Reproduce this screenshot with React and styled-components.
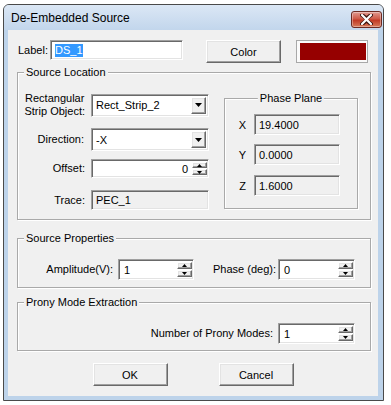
import React from 'react';
import styled, { createGlobalStyle } from 'styled-components';

const GlobalStyle = createGlobalStyle`
    html, body {
        margin: 0;
        padding: 0;
        background: #ffffff;
    }
    body {
        font-family: "Liberation Sans", Arial, sans-serif;
        font-size: 11px;
        color: #000;
    }
    * {
        box-sizing: border-box;
    }
`;

const Window = styled.div`
    margin: 4px 0 0 3px;
    width: 381px;
    height: 397px;
    border: 1px solid #4a4a4a;
    border-radius: 6px 6px 0 0;
    background: #bdd3ea;
    display: flex;
    flex-direction: column;
    overflow: hidden;
`;

const TitleBar = styled.div`
    height: 25px;
    flex-shrink: 0;
    display: flex;
    align-items: center;
    justify-content: space-between;
    padding: 0 1px 0 7px;
    background: linear-gradient(#dbe7f5, #c2d6ec);
`;

const Title = styled.div`
    font-size: 12px;
    color: #000;
`;

const CloseButton = styled.div`
    width: 31px;
    height: 17px;
    margin-top: 4px;
    border: 1px solid #6d2a22;
    border-radius: 3px;
    background: linear-gradient(#e09a90 0%, #cf5a48 45%, #c13a25 55%, #d77a5a 100%);
    box-shadow: inset 0 0 0 1px rgba(255, 255, 255, 0.35);
    display: flex;
    align-items: center;
    justify-content: center;
`;

const Client = styled.div`
    flex: 1;
    margin: 0 5px 4px 4px;
    background: #f0f0f0;
    display: flex;
    flex-direction: column;
    padding: 10px 0 0 9px;
`;

const TopRow = styled.div`
    display: flex;
    align-items: flex-start;
    height: 23px;
`;

const TopLabel = styled.div`
    width: 33px;
    height: 20px;
    padding-left: 1px;
    display: flex;
    align-items: center;
`;

const sunken = `
    border-style: solid;
    border-width: 1px;
    border-color: #a0a0a0 #ffffff #ffffff #a0a0a0;
    box-shadow: inset 1px 1px 0 #696969, inset -1px -1px 0 #e3e3e3;
`;

const raised = `
    border-style: solid;
    border-width: 1px;
    border-color: #ffffff #696969 #696969 #ffffff;
    box-shadow: inset -1px -1px 0 #a0a0a0, inset 1px 1px 0 #e3e3e3;
    background: #f0f0f0;
`;

const TextBox = styled.div`
    ${sunken}
    width: ${p => p.w}px;
    height: ${p => p.h || 20}px;
    background: ${p => (p.readOnly ? '#f0f0f0' : '#ffffff')};
    display: flex;
    align-items: center;
    padding: 0 4px;
    justify-content: ${p => (p.right ? 'flex-end' : 'flex-start')};
`;

const Selected = styled.span`
    background: #3399ff;
    color: #fff;
    line-height: 13px;
`;

const PushButton = styled.div`
    ${raised}
    width: ${p => p.w || 75}px;
    height: 23px;
    margin-left: ${p => p.ml || 0}px;
    display: flex;
    align-items: center;
    justify-content: center;
`;

const Swatch = styled.div`
    width: 72px;
    height: 23px;
    margin-left: 15px;
    border: 1px solid #a8a8a8;
    padding: 2px 1px 2px 3px;
    background: #fafafa;
`;

const SwatchFill = styled.div`
    width: 100%;
    height: 100%;
    background: #960000;
`;

const Group = styled.div`
    position: relative;
    width: 354px;
    height: ${p => p.h}px;
    margin-top: ${p => p.mt}px;
    border: 1px solid #a9a9a9;
    box-shadow: inset 1px 1px 0 #fff, 1px 1px 0 #fff;
    padding: ${p => p.pad};
    display: flex;
`;

const Legend = styled.span`
    position: absolute;
    top: -8px;
    left: ${p => (p.center ? '50%' : '6px')};
    transform: ${p => (p.center ? 'translateX(-50%)' : 'none')};
    padding: 0 2px;
    background: #f0f0f0;
    line-height: 14px;
    white-space: nowrap;
`;

const LeftCol = styled.div`
    display: flex;
    flex-direction: column;
`;

const FormRow = styled.div`
    display: flex;
    align-items: center;
    margin-top: ${p => p.mt || 0}px;
`;

const RowLabel = styled.div`
    width: ${p => p.w}px;
    margin-right: ${p => p.gap}px;
    text-align: right;
    line-height: 13px;
    white-space: nowrap;
`;

const Stacked = styled.span`
    display: inline-block;
    text-align: center;
`;

const Combo = styled.div`
    ${sunken}
    width: 118px;
    height: 23px;
    background: #fff;
    display: flex;
    align-items: stretch;
    padding: 2px;
`;

const ComboText = styled.div`
    flex: 1;
    display: flex;
    align-items: center;
    padding-left: 2px;
`;

const DropButton = styled.div`
    ${raised}
    width: 15px;
    display: flex;
    align-items: center;
    justify-content: center;
`;

const Spin = styled.div`
    ${sunken}
    width: ${p => p.w}px;
    height: ${p => p.h || 21}px;
    background: #fff;
    display: flex;
    align-items: stretch;
    padding: 2px 1px 2px 2px;
`;

const SpinText = styled.div`
    flex: 1;
    display: flex;
    align-items: center;
    padding: 0 4px 0 3px;
    justify-content: ${p => (p.right ? 'flex-end' : 'flex-start')};
`;

const SpinButtons = styled.div`
    width: 15px;
    display: flex;
    flex-direction: column;
    gap: 1px;
`;

const SpinButton = styled.div`
    ${raised}
    flex: 1;
    display: flex;
    align-items: center;
    justify-content: center;
`;

const PhaseGroup = styled.div`
    position: relative;
    width: 134px;
    height: 111px;
    margin: 6px 0 0 15px;
    border: 1px solid #a9a9a9;
    box-shadow: inset 1px 1px 0 #fff, 1px 1px 0 #fff;
    padding: 15px 0 0 6px;
    display: flex;
    flex-direction: column;
`;

const PhaseRow = styled.div`
    display: flex;
    align-items: center;
    margin-top: ${p => p.mt || 0}px;
`;

const AxisLabel = styled.div`
    width: 23px;
    text-align: center;
`;

const Line = styled.div`
    display: flex;
    align-items: center;
    justify-content: ${p => p.justify || 'flex-start'};
    width: 100%;
`;

const ButtonRow = styled.div`
    display: flex;
    justify-content: center;
    gap: 51px;
    margin: 12px 0 0 -9px;
`;

function ArrowDown({ w = 7, h = 4 }) {
    return (
        <svg width={w} height={h} viewBox={`0 0 ${w} ${h}`}>
            <polygon points={`0,0 ${w},0 ${w / 2},${h}`} fill="#000" />
        </svg>
    );
}

function ArrowUp({ w = 5, h = 3 }) {
    return (
        <svg width={w} height={h} viewBox={`0 0 ${w} ${h}`}>
            <polygon points={`0,${h} ${w},${h} ${w / 2},0`} fill="#000" />
        </svg>
    );
}

function SpinBox({ w, value, right }) {
    return (
        <Spin w={w} h={right ? 19 : 21}>
            <SpinText right={right}>{value}</SpinText>
            <SpinButtons>
                <SpinButton><ArrowUp /></SpinButton>
                <SpinButton><ArrowDown w={5} h={3} /></SpinButton>
            </SpinButtons>
        </Spin>
    );
}

function ComboBox({ value }) {
    return (
        <Combo>
            <ComboText>{value}</ComboText>
            <DropButton><ArrowDown /></DropButton>
        </Combo>
    );
}

export default function App() {
    return (
        <>
            <GlobalStyle />
            <Window>
                <TitleBar>
                    <Title>De-Embedded Source</Title>
                    <CloseButton>
                        <svg width="13" height="11" viewBox="0 0 13 11">
                            <path d="M2 1 L6.5 4.5 L11 1 M2 10 L6.5 6.5 L11 10" stroke="#3b1510" strokeWidth="4" fill="none" strokeLinecap="round" />
                            <path d="M2 1 L11 10 M11 1 L2 10" stroke="#fff" strokeWidth="2.2" fill="none" strokeLinecap="round" />
                        </svg>
                    </CloseButton>
                </TitleBar>
                <Client>
                    <TopRow>
                        <TopLabel>Label:</TopLabel>
                        <TextBox w={133}><Selected>DS_1</Selected></TextBox>
                        <PushButton ml={23}>Color</PushButton>
                        <Swatch><SwatchFill /></Swatch>
                    </TopRow>

                    <Group h={148} mt={9} pad="19px 0 0 0">
                        <Legend>Source Location</Legend>
                        <LeftCol>
                            <FormRow>
                                <RowLabel w={67} gap={6}>
                                    <Stacked>Rectangular<br />Strip Object:</Stacked>
                                </RowLabel>
                                <ComboBox value="Rect_Strip_2" />
                            </FormRow>
                            <FormRow mt={10}>
                                <RowLabel w={66} gap={7}>Direction:</RowLabel>
                                <ComboBox value="-X" />
                            </FormRow>
                            <FormRow mt={8}>
                                <RowLabel w={67} gap={6}>Offset:</RowLabel>
                                <SpinBox w={118} value="0" right />
                            </FormRow>
                            <FormRow mt={12}>
                                <RowLabel w={67} gap={6}>Trace:</RowLabel>
                                <TextBox w={118} readOnly>PEC_1</TextBox>
                            </FormRow>
                        </LeftCol>
                        <PhaseGroup>
                            <Legend center>Phase Plane</Legend>
                            <PhaseRow>
                                <AxisLabel>X</AxisLabel>
                                <TextBox w={86} h={21} readOnly>19.4000</TextBox>
                            </PhaseRow>
                            <PhaseRow mt={9}>
                                <AxisLabel>Y</AxisLabel>
                                <TextBox w={86} h={21} readOnly>0.0000</TextBox>
                            </PhaseRow>
                            <PhaseRow mt={10}>
                                <AxisLabel>Z</AxisLabel>
                                <TextBox w={86} h={21} readOnly>1.6000</TextBox>
                            </PhaseRow>
                        </PhaseGroup>
                    </Group>

                    <Group h={50} mt={18} pad="13px 0 0 0">
                        <Legend>Source Properties</Legend>
                        <Line>
                            <RowLabel w={95} gap={5}>Amplitude(V):</RowLabel>
                            <SpinBox w={76} value="1" />
                            <RowLabel w={82} gap={2}>Phase (deg):</RowLabel>
                            <SpinBox w={77} value="0" />
                        </Line>
                    </Group>

                    <Group h={49} mt={14} pad="14px 15px 0 0">
                        <Legend>Prony Mode Extraction</Legend>
                        <Line justify="flex-end">
                            <RowLabel w={150} gap={5}>Number of Prony Modes:</RowLabel>
                            <SpinBox w={77} value="1" />
                        </Line>
                    </Group>

                    <ButtonRow>
                        <PushButton>OK</PushButton>
                        <PushButton>Cancel</PushButton>
                    </ButtonRow>
                </Client>
            </Window>
        </>
    );
}
